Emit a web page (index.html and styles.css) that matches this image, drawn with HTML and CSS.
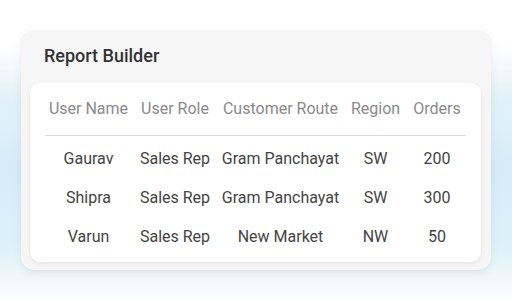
FILE: index.html
```html
<!DOCTYPE html>
<html>
<head>
<meta charset="utf-8">
<link rel="stylesheet" href="styles.css">
</head>
<body>
<div class="page">
  <div class="card">
    <h1 class="title">Report Builder</h1>
    <div class="panel">
      <table class="report">
        <colgroup>
          <col class="c-name"><col class="c-role"><col class="c-route"><col class="c-region"><col class="c-orders">
        </colgroup>
        <thead>
          <tr><th>User Name</th><th>User Role</th><th>Customer Route</th><th>Region</th><th>Orders</th></tr>
        </thead>
        <tbody>
          <tr><td>Gaurav</td><td>Sales Rep</td><td>Gram Panchayat</td><td>SW</td><td>200</td></tr>
          <tr><td>Shipra</td><td>Sales Rep</td><td>Gram Panchayat</td><td>SW</td><td>300</td></tr>
          <tr><td>Varun</td><td>Sales Rep</td><td>New Market</td><td>NW</td><td>50</td></tr>
        </tbody>
      </table>
    </div>
  </div>
</div>
</body>
</html>
```

FILE: styles.css
```css
* { box-sizing: border-box; }
html, body { margin: 0; padding: 0; }
body {
  width: 512px;
  height: 302px;
  overflow: hidden;
  font-family: Roboto, "Liberation Sans", sans-serif;
  background: linear-gradient(to bottom, #ffffff 0px, #ffffff 45px, #e4f2f9 95px, #d6ecf7 170px, #dcf0f9 240px, #eef7fb 275px, #ffffff 302px);
}
.page {
  padding: 30px 21px 0 21px;
}
.card {
  width: 470px;
  height: 240px;
  background: #f6f6f6;
  border-radius: 13px;
  padding: 16px 10px 0 9px;
  box-shadow: 0 3px 10px rgba(0, 0, 0, 0.06), 0 1px 2px rgba(0,0,0,0.04);
}
.title {
  margin: 0 0 17px 14px;
  font-size: 18px;
  line-height: 20px;
  font-weight: 500;
  color: #333333;
}
.panel {
  background: #ffffff;
  border-radius: 11px;
  height: 179px;
  padding: 16px 15px 0 15px;
  box-shadow: 0 2px 5px rgba(0, 0, 0, 0.07);
}
.report {
  width: 421px;
  border-collapse: collapse;
  table-layout: fixed;
  font-size: 16px;
  line-height: 20px;
}
.c-name { width: 87px; }
.c-role { width: 86px; }
.c-route { width: 125px; }
.c-region { width: 65px; }
.c-orders { width: 58px; }
.report th {
  font-weight: 400;
  color: #8a8a8a;
  text-align: center;
  padding: 0 0 16px 0;
  border-bottom: 1px solid #dcdcdc;
  white-space: nowrap;
}
.report td {
  color: #444444;
  text-align: center;
  padding: 9px 0 10px 0;
  white-space: nowrap;
}
.report tbody tr:first-child td {
  padding-top: 13px;
}
```
